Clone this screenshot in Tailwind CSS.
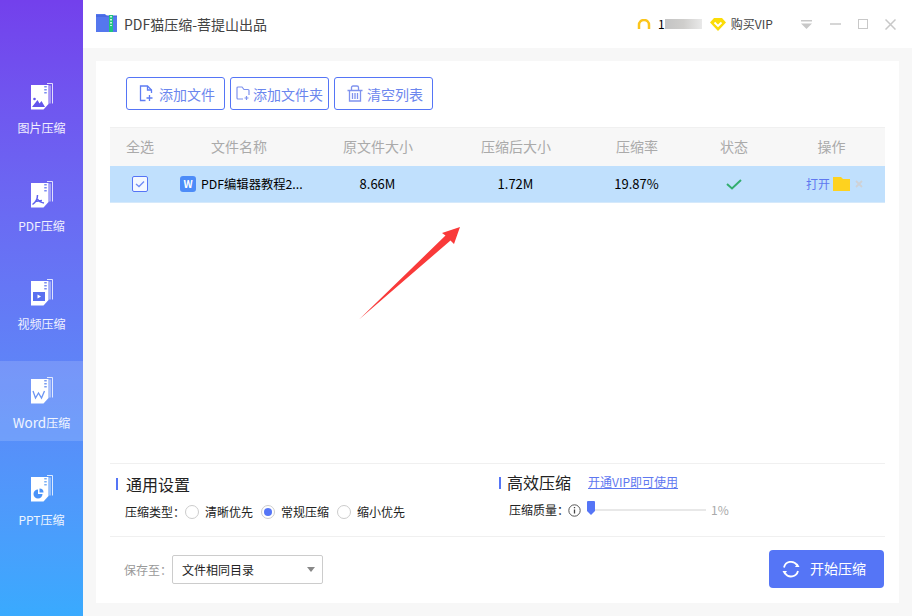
<!DOCTYPE html>
<html lang="zh-CN">
<head>
<meta charset="UTF-8">
<title>PDF猫压缩</title>
<script src="https://cdn.jsdelivr.net/npm/@tailwindcss/browser@4"></script>
</head>
<body class="w-[912px] h-[616px] overflow-hidden flex bg-[#f7f7f7] font-['Noto_Sans_CJK_SC','Liberation_Sans',sans-serif] text-[12px] text-[#333]">

<!-- sidebar -->
<aside class="w-[83px] h-full shrink-0 flex flex-col gap-[18px] pt-[67px] bg-linear-to-b from-[#7340ec] to-[#39aafe] text-white/90">
  <a class="h-20 flex flex-col items-center pt-4">
    <svg width="22" height="27" viewBox="0 0 22 27"><path d="M16 .5h5.500v20M19 2.500v18" fill="none" stroke="#fff" stroke-opacity=".8"/><path d="M0 2h17.500v19l-5 5.500H0z" fill="#fff"/><path d="M14.500 3v9" stroke="#7a8cf0" stroke-width="2.500" stroke-dasharray="1.500 1.500"/><path d="M1 24h13l-3.500-6-2 2.500-2-3.500z" fill="#6355ec"/><circle cx="3.500" cy="16" r="1.300" fill="#6355ec"/></svg>
    <span class="mt-[10px] leading-4">图片压缩</span>
  </a>
  <a class="h-20 flex flex-col items-center pt-4">
    <svg width="22" height="27" viewBox="0 0 22 27"><path d="M16 .5h5.500v20M19 2.500v18" fill="none" stroke="#fff" stroke-opacity=".8"/><path d="M0 2h17.500v19l-5 5.500H0z" fill="#fff"/><path d="M14.500 3v9" stroke="#7a8cf0" stroke-width="2.500" stroke-dasharray="1.500 1.500"/><path d="M6.500 14c0 4-2 7.500-5 9.500M6.500 18c1 2 3 3.500 6.500 4M4 20.500l7-1" fill="none" stroke="#5f62ee" stroke-width="1.500"/></svg>
    <span class="mt-[10px] leading-4">PDF压缩</span>
  </a>
  <a class="h-20 flex flex-col items-center pt-4">
    <svg width="22" height="27" viewBox="0 0 22 27"><path d="M16 .5h5.500v20M19 2.500v18" fill="none" stroke="#fff" stroke-opacity=".8"/><path d="M0 2h17.500v19l-5 5.500H0z" fill="#fff"/><path d="M14.500 3v9" stroke="#7a8cf0" stroke-width="2.500" stroke-dasharray="1.500 1.500"/><rect x="2" y="13" width="12" height="9" fill="#5a70f0"/><path d="M6.500 15.500v4l3.500-2z" fill="#fff"/></svg>
    <span class="mt-[10px] leading-4">视频压缩</span>
  </a>
  <a class="h-20 flex flex-col items-center pt-4 bg-white/15">
    <svg width="22" height="27" viewBox="0 0 22 27"><path d="M16 .5h5.500v20M19 2.500v18" fill="none" stroke="#fff" stroke-opacity=".8"/><path d="M0 2h17.500v19l-5 5.500H0z" fill="#fff"/><path d="M14.500 3v9" stroke="#7a9cf0" stroke-width="2.500" stroke-dasharray="1.500 1.500"/><path d="M2 14l2.500 7 3-5 3 5 3-7" fill="none" stroke="#6b94f3" stroke-width="1.300"/></svg>
    <span class="mt-[10px] leading-4"><span class="text-[13.500px]">Word</span>压缩</span>
  </a>
  <a class="h-20 flex flex-col items-center pt-4">
    <svg width="22" height="27" viewBox="0 0 22 27"><path d="M16 .5h5.500v20M19 2.500v18" fill="none" stroke="#fff" stroke-opacity=".8"/><path d="M0 2h17.500v19l-5 5.500H0z" fill="#fff"/><path d="M14.500 3v9" stroke="#7ab0f5" stroke-width="2.500" stroke-dasharray="1.500 1.500"/><path d="M7 14.500a4.500 4.500 0 1 0 4.500 4.500H7z" fill="#4a93f8"/><path d="M8.500 13.500a4 4 0 0 1 4 4h-4z" fill="#4a93f8"/></svg>
    <span class="mt-[10px] leading-4">PPT压缩</span>
  </a>
</aside>

<main class="flex-1 min-w-0 flex flex-col">
  <!-- title bar -->
  <header class="h-12 shrink-0 bg-white flex items-center pl-[13px] text-[#444]">
    <svg width="22" height="20" viewBox="0 0 22 20" class="mb-0.5"><path d="M0 1h9l2 2h10v16H0z" fill="#5577ee"/><path d="M0 3h21" stroke="#3f5fd8"/><rect x="13" y="2" width="4" height="17" fill="#1fc47f"/><path d="M15 3v10" stroke="#fff" stroke-width="1.500" stroke-dasharray="1.500 1.500"/></svg>
    <span class="ml-1.5 text-[14px]">PDF猫压缩-菩提山出品</span>

    <svg width="14" height="11" viewBox="0 0 14 11" class="ml-[370px]"><path d="M2 10V6a5 5 0 0 1 10 0v4" fill="none" stroke="#fbc51c" stroke-width="2.500"/></svg>
    <span class="ml-[7px] text-black">1</span>
    <span class="w-[37px] h-[10px] bg-linear-to-r from-[#c4c4c4] via-[#cfcecc] to-[#e9e9e9]"></span>
    <svg width="16" height="13" viewBox="0 0 16 13" class="ml-[8px]"><path d="M4 0h8l4 4.500L8 13 0 4.500z" fill="#fbdc06"/><path d="M4.500 4.500L8 8l3.500-3.500" fill="none" stroke="#fff" stroke-width="1.800"/></svg>
    <span class="ml-[5px] w-11 whitespace-nowrap">购买VIP</span>

    <svg width="11" height="9" viewBox="0 0 11 9" class="ml-[26px]"><path d="M0 .75h11" stroke="#c8c8c8" stroke-width="1.500"/><path d="M0 3.500h11L5.500 9z" fill="#c8c8c8"/></svg>
    <svg width="11" height="2" viewBox="0 0 11 2" class="ml-[18px]"><path d="M0 1h11" stroke="#c8c8c8" stroke-width="1.500"/></svg>
    <svg width="10" height="10" viewBox="0 0 10 10" class="ml-[17px]"><rect x=".5" y=".5" width="9" height="9" fill="none" stroke="#c8c8c8"/></svg>
    <svg width="11" height="11" viewBox="0 0 11 11" class="ml-[17px]"><path d="M.5.500l10 10M10.500.500l-10 10" stroke="#c8c8c8" stroke-width="1.500"/></svg>
  </header>

  <!-- card -->
  <section class="relative ml-[13px] mt-[13px] w-[803px] h-[542px] bg-white flex flex-col">
    <div class="flex gap-[5px] pl-[30px] pt-4 h-[66px] shrink-0">
      <button class="w-[99px] h-[33px] flex items-center border border-[#5575f6] rounded-[3px] pl-3 text-[#6b86ee]">
        <svg width="15" height="17" viewBox="0 0 15 17" fill="none" stroke="#5f7df3" stroke-width="1.300"><path d="M6.500 15.500H1.500V1H8.500l4 4v3"/><path d="M8.500 1v4h4"/><path d="M10.500 10v6M7.500 13h6"/></svg>
        <span class="ml-[5px] text-[14px] leading-none">添加文件</span>
      </button>
      <button class="w-[99px] h-[33px] flex items-center border border-[#5575f6] rounded-[3px] pl-[5px] text-[#6b86ee]">
        <svg width="15" height="15" viewBox="0 0 15 15" fill="none" stroke="#7f92ee" stroke-width="1.200"><path d="M7 13H2a1 1 0 0 1-1-1V2a1 1 0 0 1 1-1h4l2 2.500h4a1 1 0 0 1 1 1V9"/><path d="M10.500 10v4M8.500 12h4"/></svg>
        <span class="ml-[2px] text-[14px] leading-none whitespace-nowrap">添加文件夹</span>
      </button>
      <button class="w-[99px] h-[33px] flex items-center border border-[#5575f6] rounded-[3px] pl-3 text-[#6b86ee]">
        <svg width="16" height="17" viewBox="0 0 16 17" fill="none" stroke="#7f92ee" stroke-width="1.300"><path d="M.5 5.500h15M4.500 5V2.500a1.500 1.500 0 0 1 1.500-1.500h4a1.500 1.500 0 0 1 1.500 1.500V5M2.500 5.500V16h11V5.500M5.500 8v6M8 8v6M10.500 8v6"/></svg>
        <span class="ml-[4px] text-[14px] leading-none">清空列表</span>
      </button>
    </div>

    <!-- table -->
    <div class="ml-[14px] w-[775px] flex-1 min-h-0">
      <div class="h-[39px] pb-[2px] grid grid-cols-[60px_138px_140px_136px_106px_88px_107px] items-center text-center text-[14px] text-[#aaa] bg-[#f7f7f7] border-t border-[#f0f0f0]">
        <span>全选</span><span>文件名称</span><span>原文件大小</span><span>压缩后大小</span><span>压缩率</span><span>状态</span><span>操作</span>
      </div>
      <div class="h-[37px] grid grid-cols-[60px_138px_140px_136px_106px_88px_107px] items-center text-center text-[13px] text-black bg-[#c0e0fd] border-b border-[#d5e9fb]">
        <span class="flex justify-center pr-[1px]">
          <svg width="16" height="16" viewBox="0 0 16 16"><rect x=".5" y=".5" width="15" height="15" rx="1.500" fill="#f4f8ff" stroke="#5575f6"/><path d="M4 8l3 2.500 5-5" fill="none" stroke="#6f8cf5" stroke-width="1.300"/></svg>
        </span>
        <span class="flex items-center pl-[10px] whitespace-nowrap text-[12.300px]">
          <span class="w-4 h-4 rounded-[3px] bg-[#4d8cf8] text-white text-[10px] font-bold leading-4 text-center shrink-0">W</span>
          <span class="ml-[5px]">PDF编辑器教程2...</span>
        </span>
        <span class="pr-[1px]">8.66M</span>
        <span class="pr-[1px]">1.72M</span>
        <span class="pr-[1px]">19.87%</span>
        <span class="flex justify-center">
          <svg width="16" height="11" viewBox="0 0 16 11"><path d="M1 5l5 4.500L15 1" fill="none" stroke="#33ad6f" stroke-width="2"/></svg>
        </span>
        <span class="flex items-center pl-7 whitespace-nowrap text-[12px]">
          <span class="text-[#5f78f0]">打开</span>
          <svg width="17" height="14" viewBox="0 0 17 14" class="ml-[3px]"><path d="M0 0h8l2 2h7v12H0z" fill="#fed21f"/></svg>
          <svg width="8" height="8" viewBox="0 0 8 8" class="ml-[5px]"><path d="M1 1l6 6M7 1L1 7" stroke="#cfd2d6" stroke-width="1.800"/></svg>
        </span>
      </div>
    </div>

    <!-- red arrow on top of the list -->
    <svg class="absolute left-[262px] top-[164px]" width="104" height="96" viewBox="0 0 104 96"><path d="M1 94.500L87.500 10.500 84 8 102 2 96 19 92.500 15.500z" fill="#f93a3a"/></svg>

    <!-- settings -->
    <div class="mx-[14px] w-[775px] h-[73px] shrink-0 border-t border-[#f0f0f0] flex">
      <div class="w-[389px] pl-[6px]">
        <div class="flex items-center h-[25px] mt-[7px]">
          <i class="w-[2px] h-3 bg-[#5575f6]"></i>
          <span class="ml-2 text-[16px] text-[#222]">通用设置</span>
        </div>
        <div class="flex items-center mt-[5px] h-[22px] text-[#222]">
          <span class="ml-[9px]">压缩类型：</span>
          <span class="w-[14px] h-[14px] rounded-full border border-[#ccc] bg-white"></span>
          <span class="ml-[6px]">清晰优先</span>
          <span class="ml-2 w-[14px] h-[14px] rounded-full border border-[#ccc] bg-white flex items-center justify-center"><i class="w-2 h-2 rounded-full bg-[#5575f6]"></i></span>
          <span class="ml-[6px]">常规压缩</span>
          <span class="ml-2 w-[14px] h-[14px] rounded-full border border-[#ccc] bg-white"></span>
          <span class="ml-[6px]">缩小优先</span>
        </div>
      </div>
      <div class="flex-1">
        <div class="flex items-center h-[25px] mt-[5px]">
          <i class="w-[2px] h-3 bg-[#5575f6] mt-[2px]"></i>
          <span class="ml-[6px] text-[16px] text-[#222]">高效压缩</span>
          <a class="ml-[17px] text-[#5f78f0] underline">开通VIP即可使用</a>
        </div>
        <div class="flex items-center mt-[5px] h-[22px] text-[#222]">
          <span class="ml-[10px]">压缩质量：</span>
          <svg width="13" height="13" viewBox="0 0 13 13" class="-ml-[1px]"><circle cx="6.500" cy="6.500" r="5.700" fill="none" stroke="#555"/><path d="M6.500 3v1.300M6.500 5.500v4" stroke="#444" stroke-width="1.300"/></svg>
          <span class="relative ml-[6px] w-[119px] h-[2px] bg-[#e8e8e8]">
            <svg width="8" height="14" viewBox="0 0 8 14" class="absolute left-0 -top-[8px]"><path d="M0 1a1 1 0 0 1 1-1h6a1 1 0 0 1 1 1v9l-4 4-4-4z" fill="#5575f6"/></svg>
          </span>
          <span class="ml-[5px] text-[#aaa]">1%</span>
        </div>
      </div>
    </div>

    <!-- footer -->
    <div class="mx-[14px] w-[775px] h-[67px] shrink-0 border-t border-[#f0f0f0] flex items-center">
      <span class="ml-[14px] text-[#999]">保存至：</span>
      <div class="w-[151px] h-[29px] mt-[-1px] border border-[#ccc] rounded-[2px] flex items-center pl-[9px] pr-[7px] justify-between text-[#222]">
        <span>文件相同目录</span>
        <i class="border-x-[4px] border-x-transparent border-t-[5px] border-t-[#888]"></i>
      </div>
      <button class="ml-auto mr-[1px] mt-[-3px] w-[115px] h-[38px] rounded-[4px] bg-[#5575f6] flex items-center pl-[13px] text-white text-[14px]">
        <svg width="18" height="18" viewBox="0 0 18 18" fill="none" stroke="#fff" stroke-width="1.800"><path d="M2 7.500A7.200 7.200 0 0 1 15 5"/><path d="M16 11a7.200 7.200 0 0 1-13 2.200"/><path d="M13 7h4.500L15.500 3.500z" fill="#fff" stroke="none"/><path d="M5 11H.5l2 3.500z" fill="#fff" stroke="none"/></svg>
        <span class="ml-[10px]">开始压缩</span>
      </button>
    </div>
  </section>
</main>
</body>
</html>
